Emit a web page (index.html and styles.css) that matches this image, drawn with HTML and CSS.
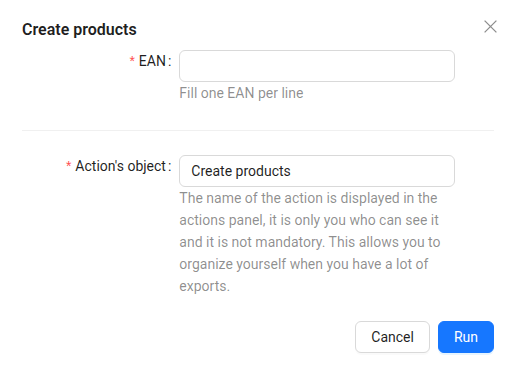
FILE: index.html
```html
<!DOCTYPE html>
<html lang="en">
<head>
    <meta charset="UTF-8">
    <meta name="viewport" content="width=device-width, initial-scale=1.0">
    <title>Create products</title>
    <link rel="stylesheet" href="styles.css">
</head>
<body>

    <div class="modal">
        <div class="modal-header">
            <div class="modal-title">Create products</div>
            <button class="modal-close" aria-label="Close">
                <svg width="13" height="13" viewBox="0 0 13 13">
                    <path d="M0.6 0.6 L12.4 12.4 M12.4 0.6 L0.6 12.4" stroke="currentColor" stroke-width="1.3" fill="none"/>
                </svg>
            </button>
        </div>

        <div class="form-item">
            <div class="form-label">
                <label for="ean" class="required">EAN</label>
            </div>
            <div class="form-control">
                <input type="text" id="ean" class="input">
                <div class="form-help">Fill one EAN per line</div>
            </div>
        </div>

        <div class="divider"></div>

        <div class="form-item">
            <div class="form-label">
                <label for="object" class="required">Action's object</label>
            </div>
            <div class="form-control">
                <input type="text" id="object" class="input" value="Create products">
                <div class="form-help">The name of the action is displayed in the actions panel, it is only you who can see it and it is not mandatory. This allows you to organize yourself when you have a lot of exports.</div>
            </div>
        </div>

        <div class="modal-footer">
            <button class="btn">Cancel</button>
            <button class="btn btn-primary">Run</button>
        </div>
    </div>

</body>
</html>
```

FILE: styles.css
```css
:root {
    --primary-color: #1677ff;
    --text-color: rgba(0, 0, 0, 0.88);
    --help-color: rgba(0, 0, 0, 0.45);
    --border-color: #d9d9d9;
    --split-color: rgba(5, 5, 5, 0.06);
    --error-color: #ff4d4f;
}

* {
    box-sizing: border-box;
}

body {
    margin: 0;
    background-color: #fff;
    color: var(--text-color);
    font-family: Roboto, 'Liberation Sans', sans-serif;
    font-size: 14px;
    line-height: 22px;
}

.modal {
    position: relative;
    padding: 18px 22px 18px;
    min-height: 100vh;
}

.modal-header {
    margin-bottom: 8px;
}

.modal-title {
    font-size: 16px;
    font-weight: 600;
    line-height: 24px;
}

.modal-close {
    position: absolute;
    top: 15px;
    right: 15px;
    width: 22px;
    height: 22px;
    padding: 0;
    border: none;
    background: transparent;
    color: var(--help-color);
    display: flex;
    align-items: center;
    justify-content: center;
    cursor: pointer;
}

.form-item {
    display: flex;
}

.form-label {
    flex: 0 0 33.3333%;
    max-width: 33.3333%;
    text-align: right;
    height: 32px;
    line-height: 22px;
    white-space: nowrap;
}

.form-label label::after {
    content: ":";
    margin: 0 8px 0 2px;
}

.form-label label.required::before {
    content: "*";
    display: inline-block;
    margin-right: 4px;
    color: var(--error-color);
    font-family: 'Liberation Sans', sans-serif;
    font-size: 14px;
    line-height: 1;
}

.form-control {
    flex: 0 0 58.3333%;
    max-width: 58.3333%;
}

.input {
    display: block;
    width: 100%;
    height: 32px;
    padding: 4px 11px;
    border: 1px solid var(--border-color);
    border-radius: 6px;
    font-family: inherit;
    font-size: 14px;
    line-height: 22px;
    color: var(--text-color);
    background: #fff;
    outline: none;
}

.form-help {
    color: var(--help-color);
    line-height: 22px;
}

.divider {
    height: 1px;
    background-color: var(--split-color);
    margin: 26px 0 24px;
}

.modal-footer {
    display: flex;
    justify-content: flex-end;
    gap: 8px;
    margin-top: 24px;
}

.btn {
    height: 32px;
    padding: 4px 15px;
    border: 1px solid var(--border-color);
    border-radius: 6px;
    background: #fff;
    color: var(--text-color);
    font-family: inherit;
    font-size: 14px;
    line-height: 22px;
    box-shadow: 0 2px 0 rgba(0, 0, 0, 0.02);
    cursor: pointer;
}

.btn-primary {
    background-color: var(--primary-color);
    border-color: var(--primary-color);
    color: #fff;
    box-shadow: 0 2px 0 rgba(5, 145, 255, 0.1);
}
```
